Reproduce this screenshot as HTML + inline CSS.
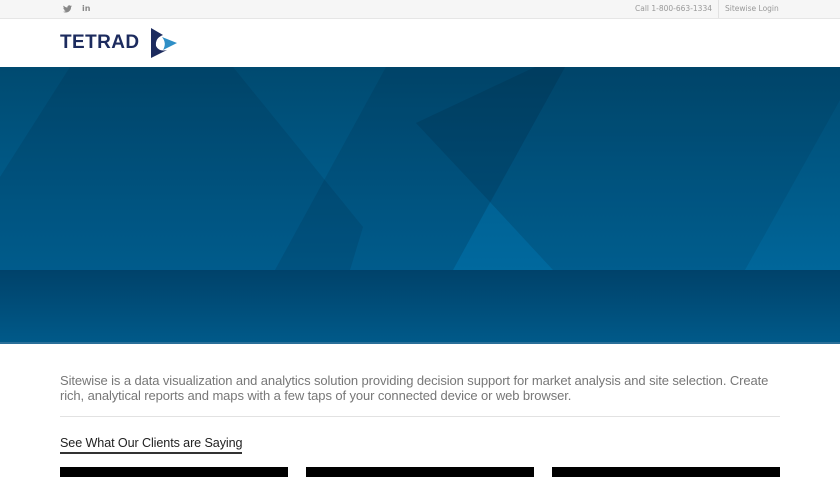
<!DOCTYPE html>
<html><head><style>
*{margin:0;padding:0;box-sizing:border-box}
body{width:840px;height:472px;overflow:hidden;background:#fff;font-family:"Liberation Sans","DejaVu Sans",sans-serif;position:relative}
.top{position:absolute;left:0;top:0;width:840px;height:19px;background:#f6f6f6;border-bottom:1px solid #e6e6e6}
.top span{position:absolute;top:4px;font-size:7.5px;color:#999;font-family:"DejaVu Sans",sans-serif;white-space:nowrap}
.sep{position:absolute;left:718px;top:0;width:1px;height:18px;background:#e2e2e2}
.logo{position:absolute;left:60px;top:32px;font-size:19px;font-weight:bold;color:#1c2b5e;letter-spacing:0.4px}
.hero{position:absolute;left:0;top:67px;width:840px;height:277px}
p.t{position:absolute;left:60px;top:374px;width:730px;font-size:13px;line-height:14.5px;color:#777;letter-spacing:-0.1px}
.hr{position:absolute;left:60px;top:416px;width:720px;height:1px;background:#e2e2e2}
.h{position:absolute;left:60px;top:436px;font-size:12.6px;color:#222;letter-spacing:-0.1px;white-space:nowrap}
.ul{position:absolute;left:60px;top:452px;width:182px;height:2px;background:#333}
.b{position:absolute;top:467px;width:228px;height:10px;background:#000}
</style></head><body>
<div class="top">
<svg style="position:absolute;left:63px;top:5px" width="9" height="8" viewBox="0 0 24 20"><path fill="#888" d="M24 2.4a9.8 9.8 0 0 1-2.8.8 5 5 0 0 0 2.2-2.7 10 10 0 0 1-3.1 1.2A4.9 4.9 0 0 0 11.9 6 14 14 0 0 1 1.7.9a4.9 4.9 0 0 0 1.5 6.6 4.9 4.9 0 0 1-2.2-.6 4.9 4.9 0 0 0 3.9 4.8 4.9 4.9 0 0 1-2.2.1 4.9 4.9 0 0 0 4.6 3.4A9.900 9.9 0 0 1 0 17.2 14 14 0 0 0 7.5 19.4c9.1 0 14-7.5 14-14v-.6A10 10 0 0 0 24 2.4z"/></svg>
<span style="left:82px;top:4px;font-size:8px;font-weight:bold;color:#888">in</span>
<span style="right:128px">Call 1-800-663-1334</span>
<div class="sep"></div>
<span style="left:725px">Sitewise Login</span>
</div>
<div class="logo">TETRAD</div>
<svg style="position:absolute;left:149px;top:28px" width="29" height="30" viewBox="0 0 29 30">
<path fill="#1c2b5e" d="M2 0 L14 7 Q6 10 7 18 Q10 24 18 22 L2 30 Z"/>
<path fill="#2f8fc6" d="M13 9 L28 15 L14 22 Q18 15 13 9Z"/>
</svg>
<svg class="hero" viewBox="0 0 840 277" preserveAspectRatio="none">
<defs>
<linearGradient id="g" x1="0" y1="0" x2="0" y2="1"><stop offset="0" stop-color="#004a70"/><stop offset="1" stop-color="#00669a"/></linearGradient>
<linearGradient id="g2" x1="0" y1="0" x2="0" y2="1"><stop offset="0" stop-color="#00426a"/><stop offset="1" stop-color="#005a8a"/></linearGradient>
</defs>
<rect width="840" height="203" fill="url(#g)"/>
<polygon points="70,0 233,0 363,160 350,203 0,203 0,110" fill="#00223c" opacity="0.15"/>
<polygon points="386,0 565,0 453,203 275,203" fill="#00223c" opacity="0.15"/>
<polygon points="416,56 535,0 565,0 490,135" fill="#00223c" opacity="0.2"/>
<polygon points="565,0 840,0 840,33 745,203 553,203 490,135" fill="#00223c" opacity="0.12"/>
<polygon points="453,203 490,135 553,203" fill="#0070a8" opacity="0.3"/>
<rect y="203" width="840" height="74" fill="url(#g2)"/>
<rect y="275" width="840" height="2" fill="#2a6f99"/>
</svg>
<p class="t">Sitewise is a data visualization and analytics solution providing decision support for market analysis and site selection. Create rich, analytical reports and maps with a few taps of your connected device or web browser.</p>
<div class="hr"></div>
<div class="h">See What Our Clients are Saying</div>
<div class="ul"></div>
<div class="b" style="left:60px"></div>
<div class="b" style="left:306px"></div>
<div class="b" style="left:552px"></div>
</body></html>
